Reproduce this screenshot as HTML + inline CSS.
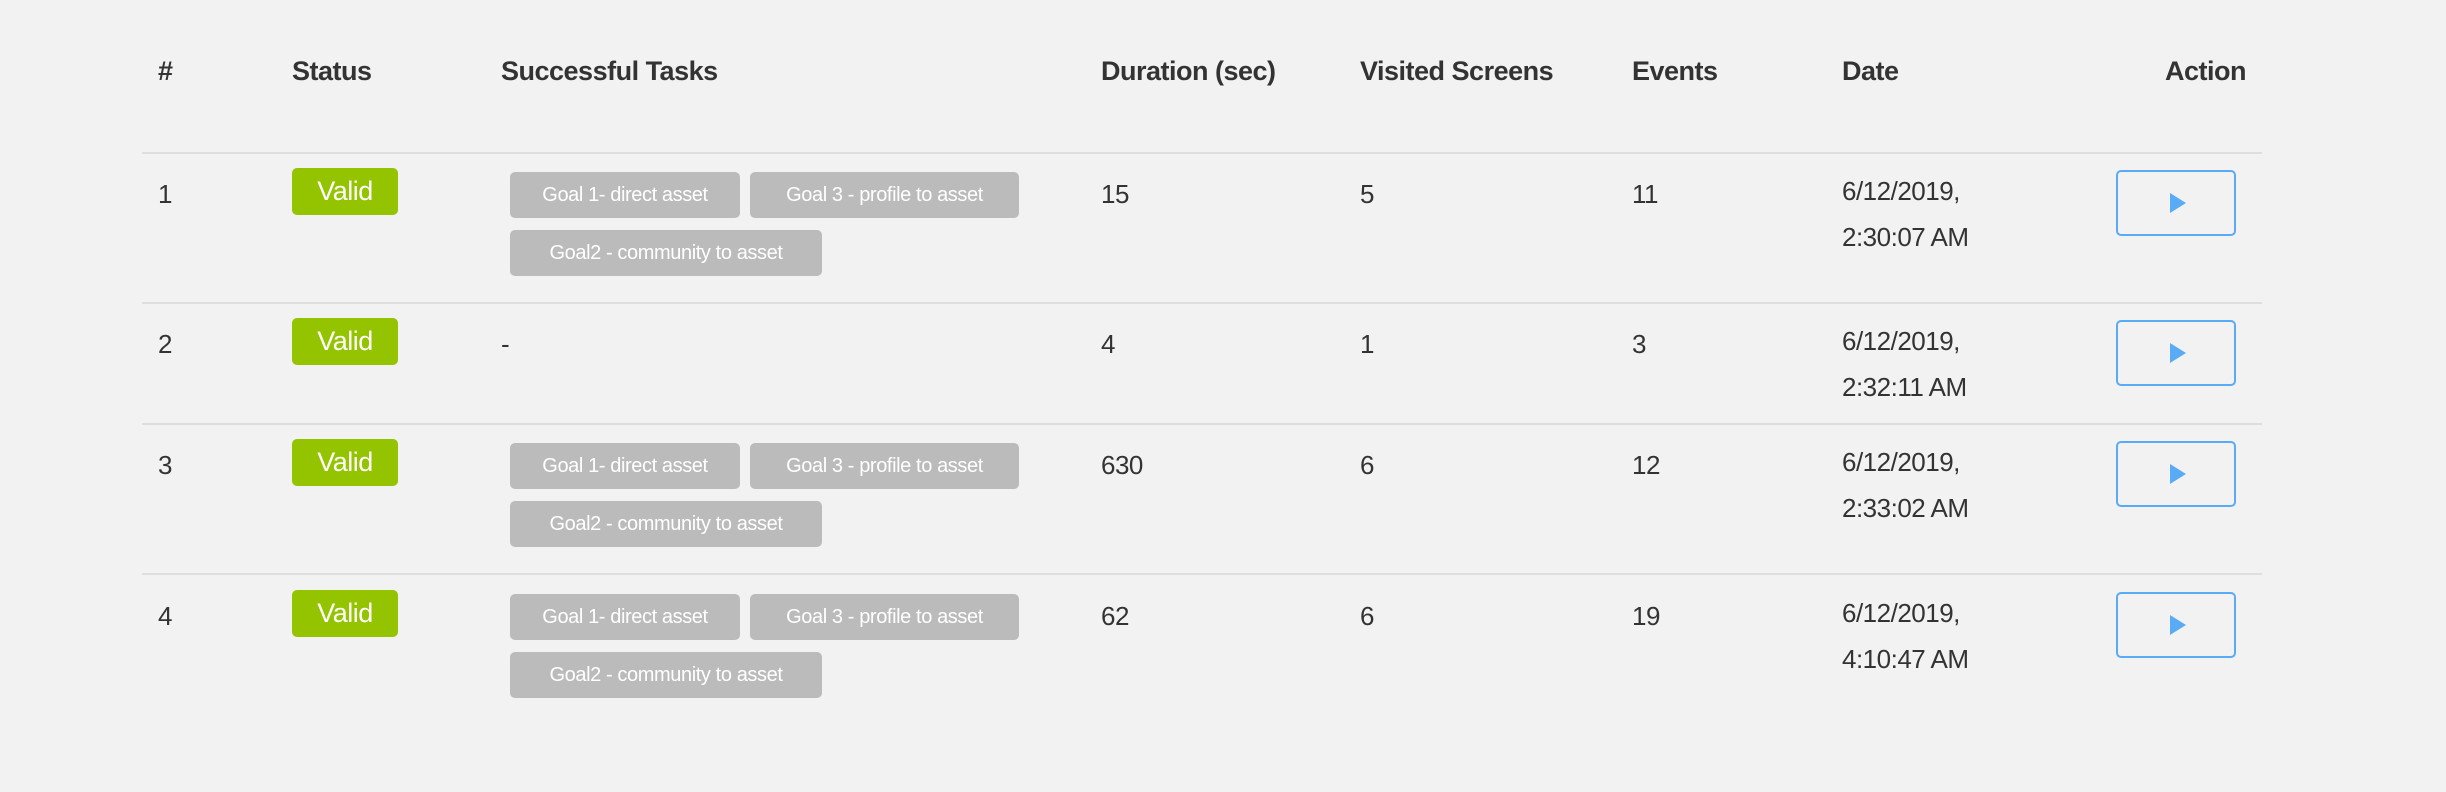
<!DOCTYPE html>
<html><head><style>
body{margin:0;width:2446px;height:792px;background:#f2f2f2;font-family:"Liberation Sans",sans-serif;color:#333;position:relative;overflow:hidden}
.a{position:absolute;white-space:nowrap}
.h{font-weight:bold;font-size:27px;top:56px;letter-spacing:-0.5px}
.line{position:absolute;left:142px;width:2120px;height:2px;background:#dedede}
.t{font-size:26px;letter-spacing:-0.5px}
.d{line-height:46px}
.valid{position:absolute;width:106px;height:47px;background:#94c400;border-radius:5px;color:#fff;font-size:27px;text-align:center;line-height:47px;letter-spacing:-0.5px}
.tag{position:absolute;height:46px;background:#bbb;border-radius:5px;color:#fff;font-size:20px;line-height:46px;text-align:center;letter-spacing:-0.4px}
.btn{position:absolute;left:2116px;width:116px;height:62px;border:2px solid #5aabf5;border-radius:5px}
.btn:after{content:"";position:absolute;left:52px;top:21px;border-left:16px solid #5aabf5;border-top:10px solid transparent;border-bottom:10px solid transparent}
</style></head><body>
<div class="a h" style="left:158px">#</div>
<div class="a h" style="left:292px">Status</div>
<div class="a h" style="left:501px">Successful Tasks</div>
<div class="a h" style="left:1101px">Duration (sec)</div>
<div class="a h" style="left:1360px">Visited Screens</div>
<div class="a h" style="left:1632px">Events</div>
<div class="a h" style="left:1842px">Date</div>
<div class="a h" style="right:200px">Action</div>

<div class="line" style="top:152px"></div>
<div class="line" style="top:302px"></div>
<div class="line" style="top:423px"></div>
<div class="line" style="top:573px"></div>

<div class="a t" style="left:158px;top:179px">1</div>
<div class="valid" style="left:292px;top:168px">Valid</div>
<div class="tag" style="left:510px;top:172px;width:230px">Goal 1- direct asset</div>
<div class="tag" style="left:750px;top:172px;width:269px">Goal 3 - profile to asset</div>
<div class="tag" style="left:510px;top:230px;width:312px">Goal2 - community to asset</div>
<div class="a t" style="left:1101px;top:179px">15</div>
<div class="a t" style="left:1360px;top:179px">5</div>
<div class="a t" style="left:1632px;top:179px">11</div>
<div class="a t d" style="left:1842px;top:168px">6/12/2019,<br>2:30:07 AM</div>
<div class="btn" style="top:170px"></div>

<div class="a t" style="left:158px;top:329px">2</div>
<div class="valid" style="left:292px;top:318px">Valid</div>
<div class="a t" style="left:501px;top:329px">-</div>
<div class="a t" style="left:1101px;top:329px">4</div>
<div class="a t" style="left:1360px;top:329px">1</div>
<div class="a t" style="left:1632px;top:329px">3</div>
<div class="a t d" style="left:1842px;top:318px">6/12/2019,<br>2:32:11 AM</div>
<div class="btn" style="top:320px"></div>

<div class="a t" style="left:158px;top:450px">3</div>
<div class="valid" style="left:292px;top:439px">Valid</div>
<div class="tag" style="left:510px;top:443px;width:230px">Goal 1- direct asset</div>
<div class="tag" style="left:750px;top:443px;width:269px">Goal 3 - profile to asset</div>
<div class="tag" style="left:510px;top:501px;width:312px">Goal2 - community to asset</div>
<div class="a t" style="left:1101px;top:450px">630</div>
<div class="a t" style="left:1360px;top:450px">6</div>
<div class="a t" style="left:1632px;top:450px">12</div>
<div class="a t d" style="left:1842px;top:439px">6/12/2019,<br>2:33:02 AM</div>
<div class="btn" style="top:441px"></div>

<div class="a t" style="left:158px;top:601px">4</div>
<div class="valid" style="left:292px;top:590px">Valid</div>
<div class="tag" style="left:510px;top:594px;width:230px">Goal 1- direct asset</div>
<div class="tag" style="left:750px;top:594px;width:269px">Goal 3 - profile to asset</div>
<div class="tag" style="left:510px;top:652px;width:312px">Goal2 - community to asset</div>
<div class="a t" style="left:1101px;top:601px">62</div>
<div class="a t" style="left:1360px;top:601px">6</div>
<div class="a t" style="left:1632px;top:601px">19</div>
<div class="a t d" style="left:1842px;top:590px">6/12/2019,<br>4:10:47 AM</div>
<div class="btn" style="top:592px"></div>
</body></html>
